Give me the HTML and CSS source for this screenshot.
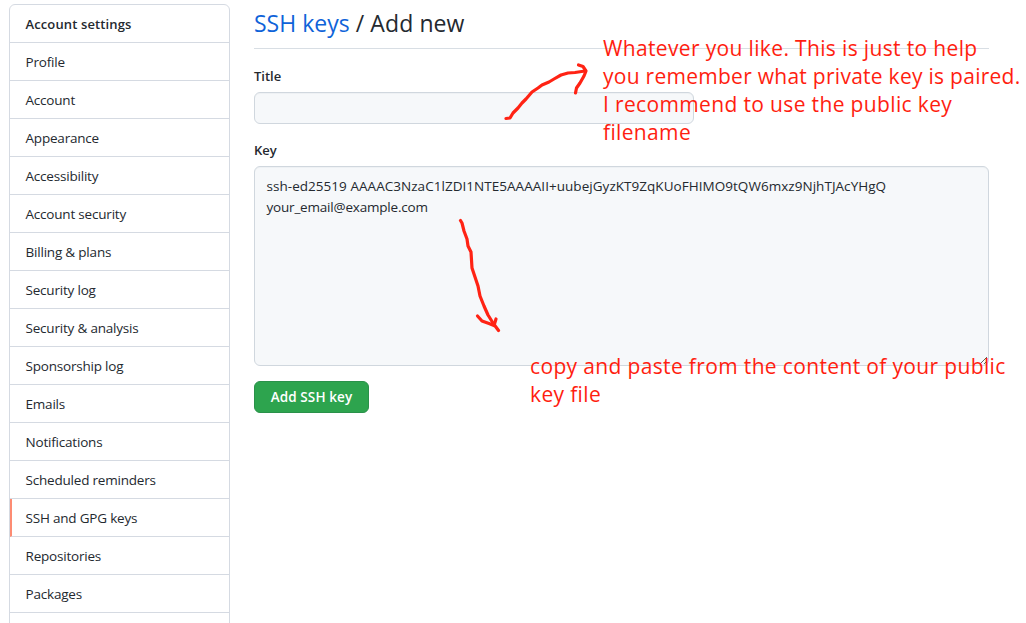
FILE: index.html
```html
<!DOCTYPE html>
<html lang="en">
<head>
<meta charset="utf-8">
<title>Add new SSH key</title>
<link rel="stylesheet" href="styles.css">
</head>
<body>
<div class="layout">
  <nav class="menu">
    <div class="menu-heading"><span>Account settings</span></div>
    <a class="menu-item"><span>Profile</span></a>
    <a class="menu-item"><span>Account</span></a>
    <a class="menu-item"><span>Appearance</span></a>
    <a class="menu-item"><span>Accessibility</span></a>
    <a class="menu-item"><span>Account security</span></a>
    <a class="menu-item"><span>Billing &amp; plans</span></a>
    <a class="menu-item"><span>Security log</span></a>
    <a class="menu-item"><span>Security &amp; analysis</span></a>
    <a class="menu-item"><span>Sponsorship log</span></a>
    <a class="menu-item"><span>Emails</span></a>
    <a class="menu-item"><span>Notifications</span></a>
    <a class="menu-item"><span>Scheduled reminders</span></a>
    <a class="menu-item selected"><span>SSH and GPG keys</span></a>
    <a class="menu-item"><span>Repositories</span></a>
    <a class="menu-item"><span>Packages</span></a>
    <a class="menu-item"></a>
  </nav>
  <main class="content">
    <h2 class="subhead"><a class="link">SSH keys</a> / Add new</h2>
    <label class="label" for="title">Title</label>
    <input class="field title-field" id="title" type="text">
    <div class="label" id="key-label">Key</div>
    <div class="field key-field" role="textbox" aria-labelledby="key-label" contenteditable="true" spellcheck="false"><div class="key-data">ssh-ed25519 AAAAC3NzaC1lZDI1NTE5AAAAII+uubejGyzKT9ZqKUoFHIMO9tQW6mxz9NjhTJAcYHgQ</div><div class="key-email">your_email@example.com</div></div>
    <button class="button" type="button">Add SSH key</button>
  </main>
</div>
<svg class="arrows" width="1026" height="623" viewBox="0 0 1026 623">
  <path d="M506 118.500L510 118L513 113L518 108L522 103L526 99L532 92L538 88L542 85L549 82L554 79L561 75L568 73L575 72.500L585 71"/>
  <path d="M578.500 65L583 66.500L586 71L584 76L580 83L576.500 88L575.500 93"/>
  <path d="M460.500 220.500L462 223L464 231L467 239L468 246L471 252L472 268L475 277L478 286L480 296L484 306L488 315L493 323L498.500 330.500"/>
  <path d="M477.500 316L482 321L489 323.500L494 325.500L496 319"/>
</svg>
<p class="note note-title">Whatever you like. This is just to help<br><span class="tight">you remember what private key is paired.</span><br>I recommend to use the public key<br>filename</p>
<p class="note note-key">copy and paste from the content of your public<br>key file</p>
</body>
</html>
```
FILE: styles.css
```css
* { box-sizing: border-box; }
body {
  margin: 0;
  height: 623px;
  overflow: hidden;
  position: relative;
  background: #fff;
  color: #24292f;
  font: 13.5px/21px "Open Sans", "Noto Sans", sans-serif;
}
.layout { display: flex; gap: 24px; padding: 4px 37px 0 9px; }
.menu {
  flex: none;
  width: 221px;
  border: 1px solid #d5dae2;
  border-radius: 6px;
}
.menu-heading, .menu-item {
  display: flex;
  align-items: center;
  height: 38px;
  padding: 2px 0 0 15.5px;
  border-bottom: 1px solid #d5dae2;
  letter-spacing: -.2px;
}
.menu-heading { font-weight: 600; font-size: 13px; letter-spacing: .12px; }
.selected { border-left: 2px solid #fd8c73; padding-left: 13.5px; }
.content { flex: 1; display: flex; flex-direction: column; align-items: flex-start; }
.subhead {
  width: 735px;
  height: 45px;
  margin: 0 0 17px;
  border-bottom: 1px solid #d8dee4;
  font-size: 23px;
  font-weight: 400;
  line-height: 39px;
  letter-spacing: .1px;
}
.link { color: #0f63d9; letter-spacing: 0; }
.label { font-size: 13px; font-weight: 600; line-height: 21px; }
.field {
  border: 1px solid #d0d7de;
  border-radius: 6px;
  background: #f6f8fa;
  color: #24292f;
  font: inherit;
  box-shadow: inset 0 1px 0 rgba(208, 215, 222, .2);
}
.title-field { width: 440px; height: 32px; margin: 5px 0 16px; }
.key-field {
  width: 735px;
  height: 200px;
  margin: 5px 0 15px;
  padding: 9px 11.5px;
  resize: vertical;
  overflow: hidden;
}
.key-data { letter-spacing: .04px; }
.key-email { letter-spacing: -.2px; }
.button {
  width: 115px;
  height: 32px;
  padding: 0;
  border: 1px solid #2a914a;
  border-radius: 6px;
  background: #2da44e;
  color: #fff;
  font: 600 13.5px/20px "Open Sans", "Noto Sans", sans-serif;
  letter-spacing: .1px;
}
.arrows {
  position: absolute;
  top: 0;
  left: 0;
  fill: none;
  stroke: #ff2314;
  stroke-width: 3.2;
  stroke-linecap: round;
  stroke-linejoin: round;
  pointer-events: none;
}
.note {
  position: absolute;
  margin: 0;
  color: #ff1e10;
  font-size: 21px;
  line-height: 28px;
  letter-spacing: .35px;
  white-space: nowrap;
}
.tight { letter-spacing: .27px; }
.note-title { left: 603px; top: 34px; }
.note-key { left: 530px; top: 352px; }
```
